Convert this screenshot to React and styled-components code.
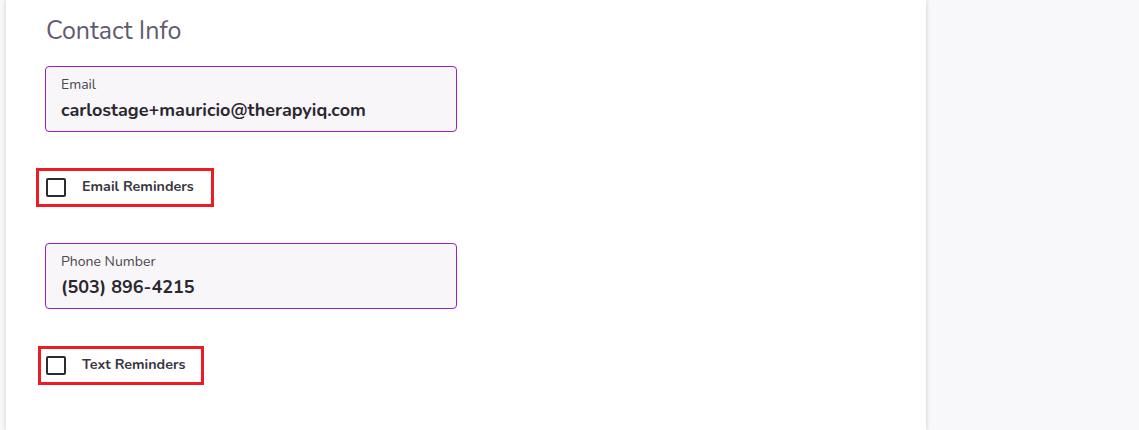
import styled, { createGlobalStyle } from 'styled-components';

const Global = createGlobalStyle`
    body {
        margin: 0;
        background: #f8f7fa;
        font-family: "Nunito", "Lato", "Noto Sans", sans-serif;
    }
`

const Page = styled.div`
    display: flex;
    height: 430px;
    overflow: hidden;
`

const Card = styled.div`
    margin-left: 6px;
    width: 920px;
    background: #ffffff;
    box-shadow: 0 0 5px rgba(0,0,0,0.18);
    padding: 15px 0 0 39px;
    box-sizing: border-box;
    display: flex;
    flex-direction: column;
    align-items: flex-start;
`

const Title = styled.h2`
    margin: 0 0 0 1px;
    font-size: 25px;
    font-weight: 400;
    line-height: 32px;
    color: #625a70;
`

const Field = styled.div`
    margin-top: ${p => p.top}px;
    width: 412px;
    height: 66px;
    box-sizing: border-box;
    border: 1px solid #9a1fc8;
    border-radius: 4px;
    background: #f8f6f9;
    padding: 9px 15px 0;
    display: flex;
    flex-direction: column;
`

const Label = styled.span`
    font-size: 14px;
    line-height: 18px;
    color: #4a4650;
`

const Value = styled.span`
    margin-top: 4px;
    font-size: 18px;
    font-weight: 700;
    line-height: 24px;
    color: #2a2730;
`

const CheckRow = styled.label`
    margin-top: ${p => p.top}px;
    margin-left: ${p => p.left}px;
    display: flex;
    align-items: center;
    gap: 16px;
    padding: 6px ${p => p.right}px 6px ${p => p.inset}px;
    height: 39px;
    box-sizing: border-box;
    border: 3px solid #ed1c24;
    cursor: pointer;
`

const Box = styled.span`
    width: 20px;
    height: 19px;
    box-sizing: border-box;
    border: 2px solid #2d2a32;
    border-radius: 2px;
    flex-shrink: 0;
`

const CheckText = styled.span`
    margin-top: -2px;
    font-size: 14.3px;
    font-weight: 700;
    color: #3a3640;
`

export default function App(){
    return (
    <>
        <Global />
        <Page>
            <Card>
                <Title>Contact Info</Title>
                <Field top={19}>
                    <Label>Email</Label>
                    <Value>carlostage+mauricio@therapyiq.com</Value>
                </Field>
                <CheckRow top={36} left={-9} inset={7} right={17}>
                    <Box />
                    <CheckText>Email Reminders</CheckText>
                </CheckRow>
                <Field top={36}>
                    <Label>Phone Number</Label>
                    <Value>(503) 896-4215</Value>
                </Field>
                <CheckRow top={37} left={-7} inset={5} right={16}>
                    <Box />
                    <CheckText>Text Reminders</CheckText>
                </CheckRow>
            </Card>
        </Page>
    </>
    );
}
